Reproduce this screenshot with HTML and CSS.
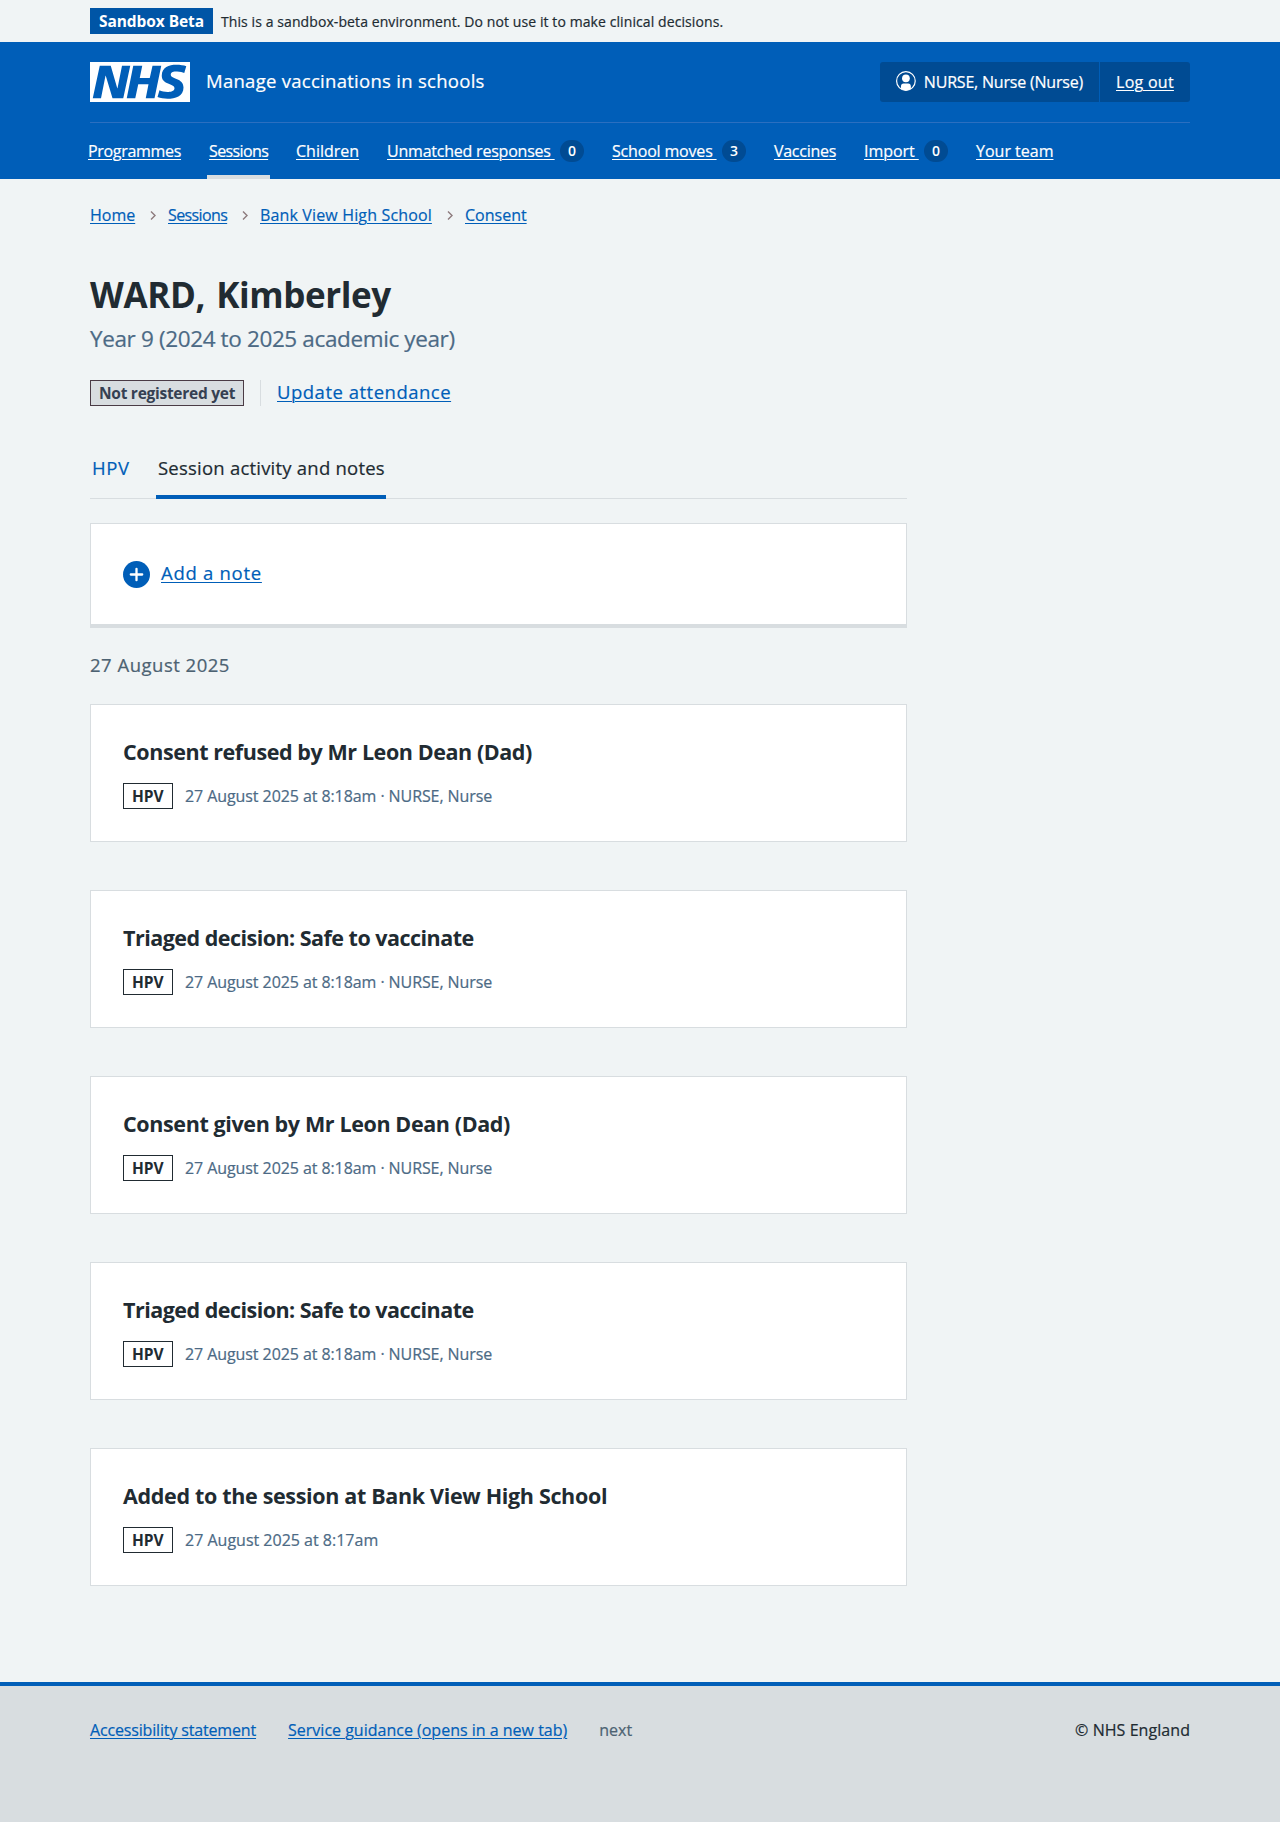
FILE: index.html
```html
<!DOCTYPE html>
<html lang="en">
<head>
<meta charset="utf-8">
<title>WARD, Kimberley – Manage vaccinations in schools</title>
<link rel="stylesheet" href="styles.css">
</head>
<body>
<div class="environment container">
  <strong class="tag tag--solid">Sandbox Beta</strong>
  <span class="environment__text">This is a sandbox-beta environment. Do not use it to make clinical decisions.</span>
</div>
<header class="header">
  <div class="container">
    <div class="header__top">
      <svg class="logo" viewBox="0 0 40 16" width="100" height="40" role="img" aria-label="NHS">
        <path fill="#fff" d="M0 0h40v16H0z"/>
        <path fill="#005eb8" d="M3.9 1.5h4.4l2.6 9h.1l1.8-9h3.3l-2.8 13H9l-2.7-9h-.1l-1.8 9H1.1M17.3 1.5h3.6l-1 4.9h4L25 1.5h3.5l-2.7 13h-3.5l1.1-5.6h-4.1l-1.2 5.6h-3.4M37.7 4.4c-.7-.3-1.6-.6-2.9-.6-1.4 0-2.5.2-2.5 1.3 0 1.8 5.1 1.2 5.1 5.1 0 3.6-3.3 4.5-6.4 4.5-1.3 0-2.9-.3-4-.7l.8-2.7c.7.4 2.1.7 3.2.7s2.8-.2 2.8-1.5c0-2.1-5.1-1.3-5.1-5 0-3.4 2.9-4.4 5.8-4.4 1.6 0 3.1.2 4 .6"/>
      </svg>
      <span class="header__service">Manage vaccinations in schools</span>
      <div class="account">
        <span class="account__item account__item--user">
          <svg class="account__icon" viewBox="0 0 20 20" width="20" height="20" aria-hidden="true">
            <circle cx="10" cy="10" r="9.4" fill="none" stroke="#fff" stroke-width="1.2"/>
            <circle cx="10" cy="7.3" r="3.9" fill="#fff"/>
            <path fill="#fff" d="M5 17.8v-2.3c0-1.8 1-2.9 2.7-2.9h4.6c1.7 0 2.7 1.1 2.7 2.9v2.3c-1.4 1-3 1.7-5 1.7s-3.6-.7-5-1.7z"/>
          </svg>
          NURSE, Nurse (Nurse)
        </span>
        <a class="account__item account__item--out" href="#">Log out</a>
      </div>
    </div>
    <nav class="nav">
      <a class="nav__item nav__item--programmes" href="#"><span>Programmes</span></a>
      <a class="nav__item nav__item--sessions nav__item--current" href="#"><span>Sessions</span></a>
      <a class="nav__item nav__item--children" href="#"><span>Children</span></a>
      <a class="nav__item nav__item--responses" href="#"><span>Unmatched responses&nbsp;</span><b class="count">0</b></a>
      <a class="nav__item nav__item--moves" href="#"><span>School moves&nbsp;</span><b class="count">3</b></a>
      <a class="nav__item nav__item--vaccines" href="#"><span>Vaccines</span></a>
      <a class="nav__item nav__item--import" href="#"><span>Import&nbsp;</span><b class="count">0</b></a>
      <a class="nav__item nav__item--team" href="#"><span>Your team</span></a>
    </nav>
  </div>
</header>
<div class="container">
  <nav class="breadcrumb">
    <a class="breadcrumb__home" href="#">Home</a>
    <svg class="chevron" viewBox="0 0 6 9" width="6" height="9"><path d="M1 .5 5 4.500 1 8.500"/></svg>
    <a class="breadcrumb__sessions" href="#">Sessions</a>
    <svg class="chevron" viewBox="0 0 6 9" width="6" height="9"><path d="M1 .5 5 4.500 1 8.500"/></svg>
    <a class="breadcrumb__school" href="#">Bank View High School</a>
    <svg class="chevron" viewBox="0 0 6 9" width="6" height="9"><path d="M1 .5 5 4.500 1 8.500"/></svg>
    <a class="breadcrumb__consent" href="#">Consent</a>
  </nav>
  <main class="main">
    <h1 class="title">WARD, Kimberley</h1>
    <p class="caption">Year 9 (2024 to 2025 academic year)</p>
    <div class="status">
      <strong class="tag tag--grey">Not registered yet</strong>
      <div class="status__action"><a href="#">Update attendance</a></div>
    </div>
    <nav class="tabs">
      <a class="tabs__item tabs__item--hpv" href="#">HPV</a>
      <a class="tabs__item tabs__item--current" href="#">Session activity and notes</a>
    </nav>
    <div class="note-card">
      <svg viewBox="0 0 26 26" width="27" height="27" aria-hidden="true">
        <circle cx="13" cy="13" r="13" fill="#005eb8"/>
        <path d="M13 7.500v11M7.500 13h11" stroke="#fff" stroke-width="2.200" stroke-linecap="round"/>
      </svg>
      <a class="note-card__link" href="#">Add a note</a>
    </div>
    <h2 class="date">27 August 2025</h2>
    <article class="event">
      <h3 class="event__title">Consent refused by Mr Leon Dean (Dad)</h3>
      <p class="event__meta"><strong class="tag tag--outline">HPV</strong><span>27 August 2025 at 8:18am · NURSE, Nurse</span></p>
    </article>
    <article class="event">
      <h3 class="event__title event__title--triage">Triaged decision: Safe to vaccinate</h3>
      <p class="event__meta"><strong class="tag tag--outline">HPV</strong><span>27 August 2025 at 8:18am · NURSE, Nurse</span></p>
    </article>
    <article class="event">
      <h3 class="event__title event__title--given">Consent given by Mr Leon Dean (Dad)</h3>
      <p class="event__meta"><strong class="tag tag--outline">HPV</strong><span>27 August 2025 at 8:18am · NURSE, Nurse</span></p>
    </article>
    <article class="event">
      <h3 class="event__title event__title--triage">Triaged decision: Safe to vaccinate</h3>
      <p class="event__meta"><strong class="tag tag--outline">HPV</strong><span>27 August 2025 at 8:18am · NURSE, Nurse</span></p>
    </article>
    <article class="event">
      <h3 class="event__title event__title--added">Added to the session at Bank View High School</h3>
      <p class="event__meta event__meta--short"><strong class="tag tag--outline">HPV</strong><span>27 August 2025 at 8:17am</span></p>
    </article>
  </main>
</div>
<footer class="footer">
  <div class="container footer__row">
    <a class="footer__accessibility" href="#">Accessibility statement</a>
    <a href="#">Service guidance (opens in a new tab)</a>
    <span class="footer__version">next</span>
    <span class="footer__copyright">© NHS England</span>
  </div>
</footer>
</body>
</html>
```
FILE: styles.css
```css
* { box-sizing: border-box; }
body {
  margin: 0;
  min-height: 1822px;
  display: flex;
  flex-direction: column;
  background: #f0f4f5;
  color: #212b32;
  font: 16px/24px "Open Sans", "Noto Sans", sans-serif;
  white-space: nowrap;
  -webkit-text-stroke: .2px;
}
h1, h2, h3, p { margin: 0; }
h1, h3, strong, b { -webkit-text-stroke: 0; }
a { color: #005eb8; text-decoration-thickness: 1px; text-underline-offset: 2px; text-decoration-skip-ink: auto; }
.container { width: 1100px; margin: 0 auto; }

.tag {
  display: inline-block;
  height: 26px;
  padding: 0 8px;
  border: 1px solid;
  font-size: 15.5px;
  line-height: 24px;
  font-weight: 700;
}
.tag--solid { width: 123px; background: #0055a6; border-color: #0055a6; color: #fff; letter-spacing: -.08px; }
.tag--grey { width: 154px; background: #d8dde0; border-color: #4a3b45; color: #354052; letter-spacing: -.27px; }
.tag--outline { width: 50px; padding: 0 8px; background: #fff; color: #212b32; letter-spacing: -.1px; }

.environment { height: 42px; display: flex; align-items: center; gap: 8px; }
.environment__text { margin-top: 1px; font-size: 14px; letter-spacing: .09px; }

.header { background: #005eb8; color: #fff; }
.header a { color: #fff; }
.header__top { display: flex; align-items: center; padding: 20px 0; border-bottom: 1px solid #2b6fc0; }
.header__service { margin: -2px 0 0 16px; font-size: 18.5px; letter-spacing: .28px; }
.account { display: flex; height: 40px; margin-left: auto; border-radius: 3px; background: #004b93; }
.account__item { display: flex; align-items: center; padding: 0 16px; }
.account__item--user { width: 220px; gap: 8px; border-right: 1px solid #005eb8; letter-spacing: -.2px; }
.account__item--out { width: 90px; letter-spacing: .28px; }
.account__icon { margin-top: -2px; }

.nav { display: flex; gap: 24px; margin: 0 -4px; height: 56px; }
.nav__item { display: flex; align-items: center; padding: 4px 2px 0; border-bottom: 4px solid transparent; text-decoration: none; }
.nav__item span { text-decoration: underline; text-decoration-thickness: 1px; text-underline-offset: 2px; }
.nav__item--current { border-bottom-color: #d8dde0; }
.nav__item--programmes { width: 97px; letter-spacing: -.31px; }
.nav__item--sessions { width: 63px; letter-spacing: -.62px; }
.nav__item--children { width: 67px; }
.nav__item--responses { width: 201px; letter-spacing: -.22px; }
.nav__item--moves { width: 138px; letter-spacing: -.18px; }
.nav__item--vaccines { width: 66px; letter-spacing: -.28px; }
.nav__item--import { width: 88px; letter-spacing: -.05px; }
.nav__item--team { width: 81px; }
.count {
  flex: none;
  width: 24px;
  height: 22px;
  margin-left: auto;
  border-radius: 12px;
  background: #004b93;
  font-size: 14px;
  font-weight: 600;
  line-height: 22px;
  text-align: center;
  letter-spacing: 0;
}

.breadcrumb { display: flex; align-items: center; padding: 24px 0 46px; }
.breadcrumb__home { width: 45px; letter-spacing: 0; }
.breadcrumb__sessions { width: 59px; letter-spacing: -.62px; }
.breadcrumb__school { width: 172px; letter-spacing: .15px; }
.breadcrumb__consent { letter-spacing: 0; }
.chevron { margin: 1px 12px 0 15px; fill: none; stroke: #8d7a7c; stroke-width: 1.4; }

.main { width: 817px; }
.title { font-size: 35px; line-height: 44px; letter-spacing: -.4px; word-spacing: 2.5px; }
.caption { margin-top: 6px; font-size: 22.5px; line-height: 32px; letter-spacing: -.37px; color: #4c6a85; }
.status { display: flex; align-items: center; height: 26px; margin-top: 25px; }
.status__action { height: 26px; margin-left: 16px; padding-left: 16px; border-left: 1px solid #d8dde0; font-size: 18.5px; letter-spacing: .5px; }

.tabs { display: flex; gap: 24px; height: 61px; margin-top: 32px; padding: 16px 0 0; border-bottom: 1px solid #d8dde0; font-size: 18.5px; line-height: 28px; }
.tabs__item { height: 45px; padding: 0 2px; border-bottom: 4px solid transparent; text-decoration: none; }
.tabs__item--hpv { width: 42px; letter-spacing: .6px; }
.tabs__item--current { width: 230px; color: #212b32; border-bottom-color: #005eb8; letter-spacing: .22px; }

.note-card { display: flex; align-items: center; gap: 11px; height: 105px; margin-top: 24px; padding: 0 32px; border: 1px solid #d8dde0; border-bottom-width: 4px; background: #fff; }
.note-card__link { margin-top: -2px; font-size: 18.5px; letter-spacing: .72px; }
.date { margin: 23px 0 25px; font-size: 18.5px; line-height: 28px; font-weight: 400; letter-spacing: .5px; color: #4c6272; }

.event { height: 138px; margin-bottom: 48px; padding: 33px 32px 0; border: 1px solid #d8dde0; background: #fff; }
.event__title { font-size: 21.5px; line-height: 28px; letter-spacing: -.42px; }
.event__title--triage { letter-spacing: -.52px; }
.event__title--given { letter-spacing: -.38px; }
.event__title--added { letter-spacing: -.33px; }
.event__meta { display: flex; align-items: center; gap: 12px; margin-top: 17px; color: #4c6a85; letter-spacing: -.08px; }
.event__meta--short { letter-spacing: 0; }

.footer { margin-top: 48px; flex: 1; border-top: 4px solid #005eb8; background: #d8dde0; }
.footer__row { display: flex; gap: 32px; padding-top: 32px; }
.footer__accessibility { letter-spacing: -.16px; }
.footer__version { color: #4c6272; }
.footer__copyright { margin-left: auto; letter-spacing: .06px; }
```
